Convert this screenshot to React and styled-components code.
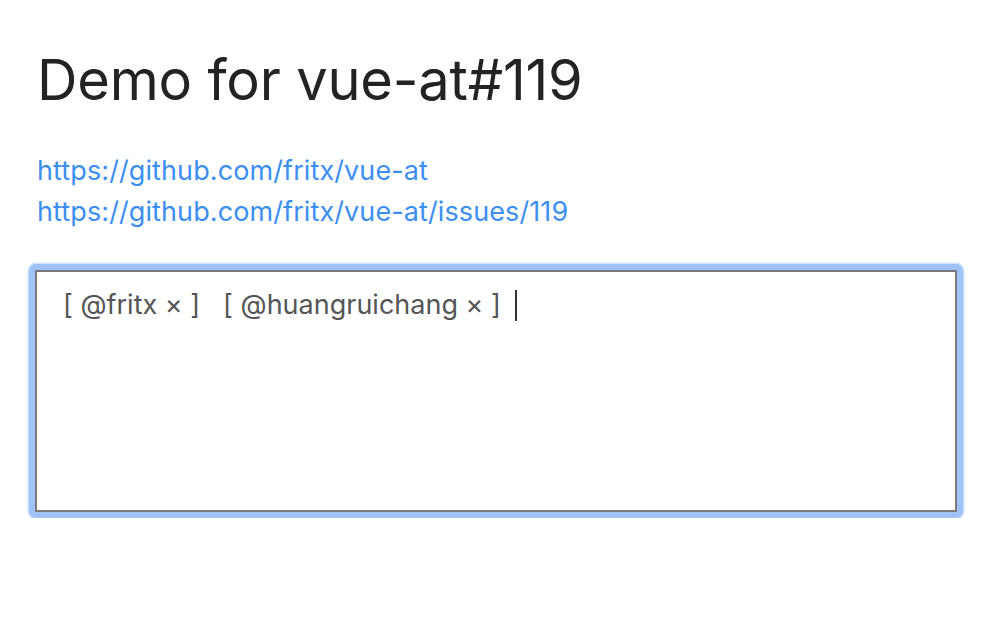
import React from "react";
import styled, { createGlobalStyle } from "styled-components";

const GlobalStyle = createGlobalStyle`
  html, body {
    margin: 0;
    padding: 0;
    background: #fff;
  }
  body {
    font-family: Inter, "Noto Sans", sans-serif;
  }
`;

const Page = styled.div`
  padding: 47px 28px 0 37px;
`;

const Title = styled.h1`
  margin: 0 0 37px;
  font-size: 56px;
  font-weight: 400;
  line-height: 66px;
  color: #232323;
  letter-spacing: -0.2px;
`;

const Links = styled.div`
  display: flex;
  flex-direction: column;
  margin-bottom: 32px;
`;

const Link = styled.a`
  font-size: 27px;
  line-height: 41px;
  color: #3d8ef2;
  text-decoration: none;
  letter-spacing: 0.1px;
`;

const FocusRing = styled.div`
  margin-left: -8px;
  padding: 6px;
  border-radius: 7px;
  background: #9fc3f7;
  box-shadow: 0 0 0 1.5px #cfe1fb;
  width: 922px;
`;

const Editor = styled.div`
  box-sizing: border-box;
  height: 242px;
  border: 2px solid #7b7b7b;
  background: #fff;
  padding: 14px 26px;
  font-size: 27px;
  line-height: 38px;
  color: #555;
`;

const Tag = styled.span`
  margin-right: 23px;
`;

const Caret = styled.span`
  display: inline-block;
  width: 2px;
  height: 31px;
  background: #333;
  vertical-align: -7px;
  margin-left: -9px;
`;

export default function App() {
  return (
    <>
      <GlobalStyle />
      <Page>
        <Title>Demo for vue-at#119</Title>
        <Links>
          <Link href="#">https://github.com/fritx/vue-at</Link>
          <Link href="#">https://github.com/fritx/vue-at/issues/119</Link>
        </Links>
        <FocusRing>
          <Editor>
            <Tag>[ @fritx × ]</Tag>
            <Tag>[ @huangruichang × ]</Tag>
            <Caret />
          </Editor>
        </FocusRing>
      </Page>
    </>
  );
}
